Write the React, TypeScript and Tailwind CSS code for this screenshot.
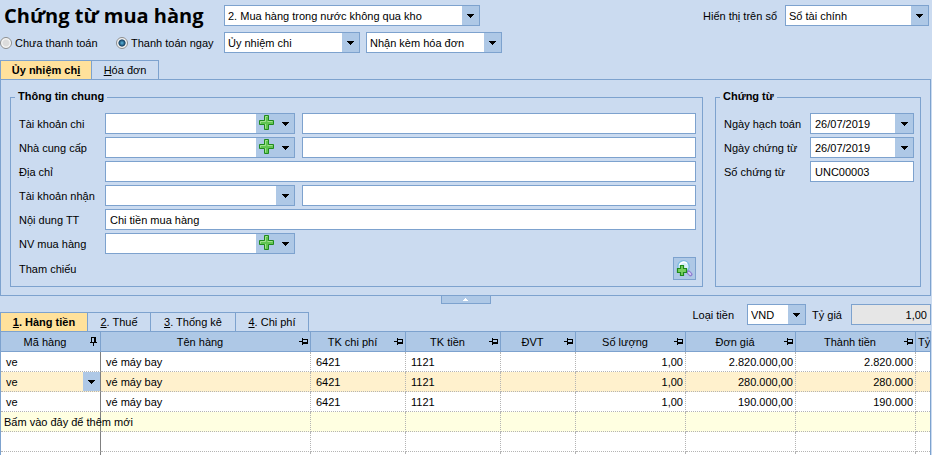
import type { ReactNode } from 'react';
import clsx from 'clsx';

const box = 'h-[21px] border border-[#7da2ce] bg-white';

function Arrow() {
  return (
    <svg width="7" height="4" viewBox="0 0 7 4" shapeRendering="crispEdges" aria-hidden="true">
      <path d="M0 0h7v1h-1v1h-1v1h-1v1h-1v-1h-1v-1h-1v-1h-1z" fill="#000" />
    </svg>
  );
}

function PlusIcon() {
  return (
    <svg width="15" height="15" viewBox="0 0 15 15" aria-hidden="true">
      <path d="M5.5 0.5h4v5h5v4h-5v5h-4v-5h-5v-4h5z" fill="#62c552" stroke="#1f8a1c" />
      <path d="M1.5 8.5V6.5H6.5V1.5H8.5M8.5 6.5h5M6.5 9v4.5" fill="none" stroke="#a2e38f" />
    </svg>
  );
}

function SearchPlusIcon() {
  return (
    <svg width="17" height="17" viewBox="0 0 17 17" aria-hidden="true">
      <circle cx="7.5" cy="6.5" r="5.7" fill="#d5effa" stroke="#7cbbe0" strokeWidth="1.4" />
      <path d="M3.5 5a4.5 4.5 0 0 1 7.5-1.5" fill="none" stroke="#fff" strokeWidth="1.6" />
      <path d="M11 11l1.5 1.5" stroke="#9aa7cf" strokeWidth="1.4" />
      <path d="M12.6 12.4l1.9 1.9" stroke="#8f7fd0" strokeWidth="4" strokeLinecap="round" />
      <path d="M12.8 12.6l1.5 1.5" stroke="#d8cff5" strokeWidth="1.8" strokeLinecap="round" />
      <path d="M4.5 5.5h3v3h3v4h-3v3h-3v-3h-3v-4h3z" fill="#79d160" stroke="#1f8a1c" strokeWidth="1.2" />
    </svg>
  );
}

function PinIcon({ pinned = false }: { pinned?: boolean }) {
  return (
    <svg width="9" height="9" viewBox="0 0 9 9" shapeRendering="crispEdges" aria-hidden="true" className="shrink-0">
      {pinned ? (
        <path d="M2 0h5v1H2zM2 1h1v4H2zM5 1h2v4H5zM1 5h7v1H1zM4 6h1v3H4z" fill="#000" />
      ) : (
        <path d="M0 4h3v1H0zM3 1h1v7H3zM4 2h5v1H4zM4 5h5v2H4zM8 3h1v2H8z" fill="#000" />
      )}
    </svg>
  );
}

function Select({ id, label, value, className }: { id: string; label?: string; value: string; className?: string }) {
  return (
    <div className={clsx(box, 'grid shrink-0 grid-cols-[minmax(0,1fr)_17px]', className)}>
      <select
        id={id}
        aria-label={label}
        className="col-span-2 col-start-1 row-start-1 h-[19px] appearance-none pr-5 pl-[3px] outline-none"
      >
        <option>{value}</option>
      </select>
      <span className="pointer-events-none col-start-2 row-start-1 flex items-center justify-center bg-[#aec8e6]">
        <Arrow />
      </span>
    </div>
  );
}

function Combo({ id, value = '', plus = false, className }: { id: string; value?: string; plus?: boolean; className?: string }) {
  return (
    <div className={clsx(box, 'flex shrink-0', className)}>
      <input id={id} type="text" defaultValue={value} className="min-w-0 flex-1 px-1 outline-none" />
      {plus && (
        <button type="button" aria-label="Thêm" className="flex w-5 justify-center bg-[#aec8e6] pt-px">
          <PlusIcon />
        </button>
      )}
      <button type="button" aria-label="Mở danh sách" className="flex w-[18px] items-center justify-center bg-[#aec8e6]">
        <Arrow />
      </button>
    </div>
  );
}

function Field({ id, label, children }: { id: string; label: string; children: ReactNode }) {
  return (
    <div className="flex items-center">
      <label htmlFor={id} className="w-[86px] shrink-0">{label}</label>
      {children}
    </div>
  );
}

function Tab({ active, children, className }: { active?: boolean; children: ReactNode; className: string }) {
  return (
    <button
      type="button"
      role="tab"
      aria-selected={!!active}
      className={clsx(
        'h-[19px] border-t border-r border-[#7da2ce]',
        active ? 'bg-[#ffe19b] font-bold' : 'bg-[#cbdbf0]',
        className,
      )}
    >
      {children}
    </button>
  );
}

const columns = [
  { name: 'Mã hàng', width: 'w-[100px]' },
  { name: 'Tên hàng', width: '' },
  { name: 'TK chi phí', width: 'w-[95px]' },
  { name: 'TK tiền', width: 'w-[95px]' },
  { name: 'ĐVT', width: 'w-[75px]' },
  { name: 'Số lượng', width: 'w-[110px]' },
  { name: 'Đơn giá', width: 'w-[110px]' },
  { name: 'Thành tiền', width: 'w-[120px]' },
];

const rows = [
  ['ve', 'vé máy bay', '6421', '1121', '', '1,00', '2.820.000,00', '2.820.000'],
  ['ve', 'vé máy bay', '6421', '1121', '', '1,00', '280.000,00', '280.000'],
  ['ve', 'vé máy bay', '6421', '1121', '', '1,00', '190.000,00', '190.000'],
];

const cell = 'h-5 border-b border-dotted border-[#b4b4b4] p-0 whitespace-nowrap';
const firstCol = '[border-right:1px_solid_#808080]';

function EmptyCells() {
  return (
    <>
      {columns.slice(1).map((c) => (
        <td key={c.name} className={clsx(cell, 'border-r')} />
      ))}
      <td className={cell} />
    </>
  );
}

export default function App() {
  return (
    <div className="flex h-screen flex-col overflow-hidden bg-[#cbdbf0] font-['Liberation_Sans',Arial,sans-serif] text-[11px] leading-[14px] text-black">
      <header className="flex items-start justify-between pt-[5px] pr-[3px]">
        <div className="grid grid-cols-[224px_auto] gap-y-[6px]">
          <h1 className="pl-1 font-['Open_Sans','Noto_Sans',sans-serif] text-[20px] leading-[21px] font-bold whitespace-nowrap">
            Chứng từ mua hàng
          </h1>
          <Select id="type" label="Loại chứng từ" value="2. Mua hàng trong nước không qua kho" className="w-64" />
          <div className="flex items-center">
            <label className="flex w-[116px] items-center gap-[3px]">
              <input
                type="radio"
                name="pay"
                className="size-3 appearance-none rounded-full border border-[#8e8f8f] bg-[radial-gradient(circle,#dcdcdc_40%,#f6f6f6_60%)]"
              />
              Chưa thanh toán
            </label>
            <label className="flex items-center gap-[3px]">
              <input
                type="radio"
                name="pay"
                defaultChecked
                className="size-3 appearance-none rounded-full border border-[#8e8f8f] bg-[radial-gradient(circle,#5bb8e0_0,#123f63_45%,#f4f4f4_56%)]"
              />
              Thanh toán ngay
            </label>
          </div>
          <div className="flex gap-[6px]">
            <Select id="method" label="Hình thức thanh toán" value="Ủy nhiệm chi" className="w-[136px]" />
            <Select id="invoice" label="Hóa đơn" value="Nhận kèm hóa đơn" className="w-[136px]" />
          </div>
        </div>
        <div className="flex items-center gap-2">
          <label htmlFor="book">Hiển thị trên sổ</label>
          <Select id="book" value="Sổ tài chính" className="w-36" />
        </div>
      </header>

      <div role="tablist" className="mt-[7px] flex border-l border-[#7da2ce]">
        <Tab active className="w-[91px]">
          Ủy nhiệm ch<u>i</u>
        </Tab>
        <Tab className="w-[67px]">
          <u>H</u>óa đơn
        </Tab>
      </div>

      <main className="mr-px flex gap-3 border border-[#7da2ce] pt-[9px] pr-[9px] pb-2 pl-[9px]">
        <fieldset className="min-w-0 flex-1 border border-[#7da2ce] pr-[6px] pb-[6px] pl-2">
          <legend className="-ml-1 h-4 px-[3px] font-bold">Thông tin chung</legend>
          <div className="mt-2 flex flex-col gap-[3px]">
            <Field id="account" label="Tài khoản chi">
              <Combo id="account" plus className="mr-[7px] w-[190px]" />
              <input aria-label="Tên tài khoản chi" className={clsx(box, 'min-w-0 flex-1 px-1')} />
            </Field>
            <Field id="supplier" label="Nhà cung cấp">
              <Combo id="supplier" plus className="mr-[7px] w-[190px]" />
              <input aria-label="Tên nhà cung cấp" className={clsx(box, 'min-w-0 flex-1 px-1')} />
            </Field>
            <Field id="address" label="Địa chỉ">
              <input id="address" className={clsx(box, 'min-w-0 flex-1 px-1')} />
            </Field>
            <Field id="receiver" label="Tài khoản nhận">
              <Combo id="receiver" className="mr-[7px] w-[190px]" />
              <input aria-label="Tên tài khoản nhận" className={clsx(box, 'min-w-0 flex-1 px-1')} />
            </Field>
            <Field id="content" label="Nội dung TT">
              <input id="content" defaultValue="Chi tiền mua hàng" className={clsx(box, 'min-w-0 flex-1 px-1')} />
            </Field>
            <Field id="staff" label="NV mua hàng">
              <Combo id="staff" plus className="w-[190px]" />
            </Field>
            <Field id="reference" label="Tham chiếu">
              <button
                id="reference"
                type="button"
                className="ml-auto flex size-[23px] items-center justify-center border border-[#7da2ce] bg-[#aec8e6]"
              >
                <SearchPlusIcon />
              </button>
            </Field>
          </div>
        </fieldset>
        <fieldset className="w-[206px] shrink-0 border border-[#7da2ce] pr-[6px] pl-2">
          <legend className="-ml-1 h-4 px-[3px] font-bold">Chứng từ</legend>
          <div className="mt-2 flex flex-col gap-[3px]">
            <Field id="postDate" label="Ngày hạch toán">
              <Combo id="postDate" value="26/07/2019" className="w-[104px]" />
            </Field>
            <Field id="docDate" label="Ngày chứng từ">
              <Combo id="docDate" value="26/07/2019" className="w-[104px]" />
            </Field>
            <Field id="docNo" label="Số chứng từ">
              <input id="docNo" defaultValue="UNC00003" className={clsx(box, 'w-[104px] px-1')} />
            </Field>
          </div>
        </fieldset>
      </main>

      <section className="mr-px grid grid-cols-[1fr_50px_1fr]">
        <div role="tablist" className="flex self-end border-l border-[#7da2ce]">
          <Tab active className="w-[87px] shrink-0">
            <u>1</u>. Hàng tiền
          </Tab>
          <Tab className="w-[63px] shrink-0">
            <u>2</u>. Thuế
          </Tab>
          <Tab className="w-[85px] shrink-0">
            <u>3</u>. Thống kê
          </Tab>
          <Tab className="w-[73px] shrink-0">
            <u>4</u>. Chi phí
          </Tab>
        </div>
        <button
          type="button"
          aria-label="Thu gọn"
          className="flex h-2 items-center justify-center border border-t-0 border-[#7da2ce] bg-[#aec8e6]"
        >
          <svg width="5" height="3" viewBox="0 0 5 3" shapeRendering="crispEdges" aria-hidden="true">
            <path d="M2 0h1v1h1v1h1v1H0V2h1V1h1z" fill="#fff" />
          </svg>
        </button>
        <div className="flex items-center justify-end pt-2 pb-[6px]">
          <label htmlFor="currency">Loại tiền</label>
          <Select id="currency" value="VND" className="mr-[6px] ml-[13px] w-[59px]" />
          <label htmlFor="rate">Tỷ giá</label>
          <input
            id="rate"
            readOnly
            defaultValue="1,00"
            className="ml-[9px] h-[21px] w-20 border border-[#7da2ce] bg-[#e6e6e6] px-[3px] text-right"
          />
        </div>
      </section>

      <div className="mr-px min-h-0 flex-1 overflow-hidden border-x border-t border-[#7da2ce] bg-white">
        <table className="w-full table-fixed border-separate border-spacing-0">
          <thead>
            <tr className="bg-[#aec8e6]">
              {columns.map((c, i) => (
                <th
                  key={c.name}
                  className={clsx('h-5 border-r border-b border-[#7da2ce] p-0 font-normal', c.width)}
                >
                  <div className="flex items-center pr-[2px]">
                    <span className="flex-1">{c.name}</span>
                    <PinIcon pinned={i === 0} />
                  </div>
                </th>
              ))}
              <th className="h-5 w-[14px] overflow-hidden border-b border-[#7da2ce] p-0 pl-[2px] text-left font-normal">Tỷ</th>
            </tr>
          </thead>
          <tbody>
            {rows.map((row, r) => (
              <tr key={r} className={r === 1 ? 'bg-[#fff1cd]' : 'bg-white'}>
                {row.map((text, i) => (
                  <td
                    key={i}
                    className={clsx(
                      cell,
                      i === 0 ? firstCol : 'border-r',
                      i > 4 ? 'pr-[2px] text-right' : r === 1 && i === 0 ? '' : 'pl-[5px]',
                    )}
                  >
                    {r === 1 && i === 0 ? (
                      <div className="grid h-[19px] grid-cols-[minmax(0,1fr)_17px]">
                        <select
                          aria-label="Mã hàng"
                          className="col-span-2 col-start-1 row-start-1 appearance-none pl-[5px] outline-none"
                        >
                          <option>{text}</option>
                        </select>
                        <span className="pointer-events-none col-start-2 row-start-1 flex items-center justify-center bg-[#aec8e6]">
                          <Arrow />
                        </span>
                      </div>
                    ) : (
                      text
                    )}
                  </td>
                ))}
                <td className={cell} />
              </tr>
            ))}
            <tr className="bg-[#ffffe1]">
              <td className={clsx(cell, firstCol, 'pl-[3px]')}>Bấm vào đây để thêm mới</td>
              <EmptyCells />
            </tr>
            {[0, 1].map((n) => (
              <tr key={n}>
                <td className={clsx(cell, firstCol)} />
                <EmptyCells />
              </tr>
            ))}
          </tbody>
        </table>
      </div>
    </div>
  );
}
